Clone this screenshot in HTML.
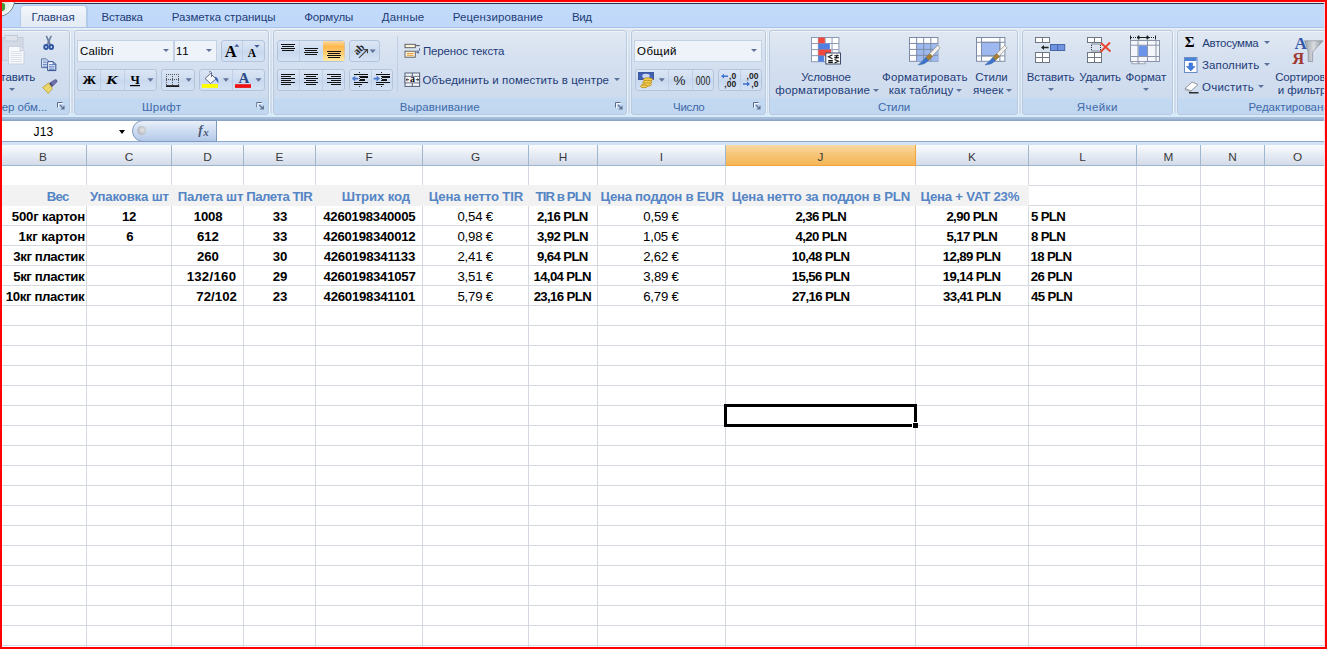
<!DOCTYPE html>
<html lang="ru">
<head>
<meta charset="utf-8">
<title>Excel</title>
<style>
html,body{margin:0;padding:0;}
body{width:1327px;height:649px;overflow:hidden;background:#fff;font-family:"Liberation Sans",sans-serif;}
#win{position:absolute;left:0;top:0;width:1327px;height:649px;overflow:hidden;background:#fff;}
#win div,#win span,#win svg{position:absolute;box-sizing:border-box;}
.red{background:#fe0000;z-index:50;}
.t{white-space:nowrap;line-height:14px;font-size:11.5px;color:#1e3c78;}
.k{color:#000;}
.gl{color:#3e6aaa;}
#topline{left:0;top:2px;width:1327px;height:2px;background:linear-gradient(#f6e4e6 0,#f6e4e6 1px,#26324d 1px,#26324d 2px);}
#tabs{left:0;top:4px;width:1327px;height:24px;background:linear-gradient(#c3dbfb,#bfd8f9);}
#tabact{left:20px;top:5px;width:66.5px;height:24px;border:1px solid #b4cbe8;border-bottom:none;border-radius:4px 4px 0 0;background:linear-gradient(#f3f7fc,#e6edf6 60%,#e4ebf5);box-shadow:1px 0 0 rgba(160,185,220,.5);}
#rib{left:0;top:27px;width:1327px;height:94px;border-top:1px solid #a9c4e8;background:linear-gradient(#e9eff7 0,#e9eff7 1px,#dde5f0 2px,#d3dfee 30%,#cbd9ec 85px,#d6ebfa 86px,#d6ebfa 88.5px,#aac1dd 89px,#a3bad8 91px,#8da5c8 92px,#8da5c8 93px);}
.grp{top:2px;height:84.5px;border:1px solid #b9c9de;border-radius:3px;background:linear-gradient(#e1e8f2 0,#d6e1f0 30%,#cddbee 67px,#c3d8f1 68px,#c1d7f0 100%);box-shadow:1px 0 0 rgba(240,246,253,.9), -1px 0 0 rgba(240,246,253,.6), inset 0 1px 0 rgba(255,255,255,.5);}
.bg{border:1px solid #b3c5dd;border-radius:3px;background:linear-gradient(#dbe6f5,#cfddf0 45%,#c8d8ee 50%,#d4e2f4);height:21.5px;}
.cb{border:1px solid #c3d1e4;background:#eef3fa;height:21.5px;}
.sep{width:1px;background:#bfcfe5;}
.arr{width:0;height:0;border-left:3px solid transparent;border-right:3px solid transparent;border-top:3.5px solid #5d7299;}
.hdr{top:145px;height:21px;border-right:1px solid #9eb6ce;border-bottom:1px solid #9eb6ce;background:linear-gradient(#f9fcfd,#e6ecf4 50%,#d3dbe9);text-align:center;font-size:11.8px;line-height:25px;color:#3a3a3a;}
.c{white-space:nowrap;font-size:13.2px;line-height:20px;height:20px;color:#000;}
.b{font-weight:bold;}
.h{color:#5585c5;font-weight:bold;}
.vl{top:166px;width:1px;height:483px;background:#d5d9e2;}
</style>
</head>
<body>
<div id="win">

<div id="tabs"></div><div id="topline"></div><div id="tabact"></div>
<div style="left:-19px;top:-17px;width:34px;height:34px;border-radius:17px;border:1.5px solid #74848f;background:radial-gradient(circle at 50% 50%,#cfe0d8 0,#e8f0ee 55%,#ffffff 80%)"></div>
<div style="left:2px;top:3px;width:3px;height:8px;background:#3f9a3a;border-radius:0 2px 3px 0"></div>
<div class="t" style="left:31.48px;top:10px;letter-spacing:-0.105px;">Главная</div>
<div class="t" style="left:101.58px;top:10px;letter-spacing:-0.25px;">Вставка</div>
<div class="t" style="left:171.68px;top:10px;letter-spacing:-0.027px;">Разметка страницы</div>
<div class="t" style="left:304.31px;top:10px;letter-spacing:-0.181px;">Формулы</div>
<div class="t" style="left:381.74px;top:10px;letter-spacing:0.192px;">Данные</div>
<div class="t" style="left:452.78px;top:10px;letter-spacing:0.104px;">Рецензирование</div>
<div class="t" style="left:571.98px;top:10px;letter-spacing:-0.432px;">Вид</div>
<div id="rib">
<div class="grp" style="left:-4px;width:73.5px"></div>
<div class="grp" style="left:73.5px;width:195px"></div>
<div class="grp" style="left:272.5px;width:354px"></div>
<div class="grp" style="left:630.5px;width:135.5px"></div>
<div class="grp" style="left:769px;width:248.5px"></div>
<div class="grp" style="left:1021.5px;width:151.5px"></div>
<div class="grp" style="left:1176.5px;width:160px"></div>
</div>
<div class="t gl" style="left:-20.42px;top:100px;letter-spacing:-0.08px;">Буфер обм...</div>
<div class="t gl" style="left:142.08px;top:100px;letter-spacing:0.254px;">Шрифт</div>
<div class="t gl" style="left:399.68px;top:100px;letter-spacing:0.065px;">Выравнивание</div>
<div class="t gl" style="left:673.08px;top:100px;letter-spacing:-0.346px;">Число</div>
<div class="t gl" style="left:878.02px;top:100px;letter-spacing:-0.26px;">Стили</div>
<div class="t gl" style="left:1076.82px;top:100px;letter-spacing:0.419px;">Ячейки</div>
<div class="t gl" style="left:1248.58px;top:100px;">Редактирование</div>
<div class="cb" style="left:77px;top:40px;width:97px"></div>
<div class="t k" style="left:80.12px;top:44px;letter-spacing:0.13px;">Calibri</div>
<div class="arr" style="left:162.5px;top:49px;"></div>
<div class="cb" style="left:174px;top:40px;width:43px"></div>
<div class="t k" style="left:176.04px;top:44px;letter-spacing:0.635px;">11</div>
<div class="arr" style="left:205.5px;top:49px;"></div>
<div class="bg" style="left:220.5px;top:40px;width:44px"></div><div class="sep" style="left:242px;top:41px;height:19.5px"></div>
<div class="bg" style="left:77px;top:69px;width:79.5px"></div><div class="sep" style="left:99.5px;top:70px;height:19.5px"></div><div class="sep" style="left:123.5px;top:70px;height:19.5px"></div>
<div class="bg" style="left:160.5px;top:69px;width:34px"></div>
<div class="bg" style="left:198.5px;top:69px;width:66px"></div><div class="sep" style="left:232px;top:70px;height:19.5px"></div>
<div class="bg" style="left:276.5px;top:40px;width:68px"></div><div class="sep" style="left:299px;top:41px;height:19.5px"></div>
<div class="bg" style="left:348.5px;top:40px;width:31px"></div>
<div class="bg" style="left:276.5px;top:69px;width:68px"></div><div class="sep" style="left:299px;top:70px;height:19.5px"></div><div class="sep" style="left:322px;top:70px;height:19.5px"></div>
<div class="bg" style="left:348.5px;top:69px;width:44.5px"></div><div class="sep" style="left:371px;top:70px;height:19.5px"></div>
<div class="sep" style="left:397px;top:36px;height:56px"></div>
<div class="t" style="left:422.88px;top:44px;letter-spacing:-0.121px;">Перенос текста</div>
<div class="t" style="left:422.48px;top:73px;letter-spacing:0.09px;">Объединить и поместить в центре</div>
<div class="arr" style="left:613.5px;top:78px;"></div>
<div class="cb" style="left:634px;top:40px;width:128px"></div>
<div class="t k" style="left:637.08px;top:44px;letter-spacing:0.372px;">Общий</div>
<div class="arr" style="left:750.5px;top:49px;"></div>
<div class="bg" style="left:634.5px;top:69px;width:79px"></div><div class="sep" style="left:667.5px;top:70px;height:19.5px"></div><div class="sep" style="left:691.5px;top:70px;height:19.5px"></div>
<div class="bg" style="left:717.5px;top:69px;width:44px"></div><div class="sep" style="left:739.5px;top:70px;height:19.5px"></div>
<div class="t" style="left:801.16px;top:70px;letter-spacing:-0.144px;">Условное</div>
<div class="t" style="left:775.34px;top:83px;letter-spacing:0.179px;">форматирование</div>
<div class="arr" style="left:873.0px;top:89px;"></div>
<div class="t" style="left:882.01px;top:70px;letter-spacing:0.168px;">Форматировать</div>
<div class="t" style="left:888.65px;top:83px;letter-spacing:0.164px;">как таблицу</div>
<div class="arr" style="left:956.0px;top:89px;"></div>
<div class="t" style="left:975.22px;top:70px;letter-spacing:-0.185px;">Стили</div>
<div class="t" style="left:972.88px;top:83px;letter-spacing:0.111px;">ячеек</div>
<div class="arr" style="left:1005.5px;top:89px;"></div>
<div class="t" style="left:1026.78px;top:70px;letter-spacing:-0.154px;">Вставить</div>
<div class="arr" style="left:1047.5px;top:88px;"></div>
<div class="t" style="left:1079.36px;top:70px;letter-spacing:-0.378px;">Удалить</div>
<div class="arr" style="left:1096.5px;top:88px;"></div>
<div class="t" style="left:1125.61px;top:70px;letter-spacing:-0.052px;">Формат</div>
<div class="arr" style="left:1142.5px;top:88px;"></div>
<div class="t" style="left:1202.14px;top:36px;letter-spacing:-0.262px;">Автосумма</div>
<div class="arr" style="left:1264.0px;top:41px;"></div>
<div class="t" style="left:1202.1px;top:58px;letter-spacing:0.075px;">Заполнить</div>
<div class="arr" style="left:1263.5px;top:63px;"></div>
<div class="t" style="left:1201.98px;top:80px;letter-spacing:0.25px;">Очистить</div>
<div class="arr" style="left:1257.5px;top:85px;"></div>
<div class="t" style="left:1275.22px;top:70px;letter-spacing:-0.15px;">Сортировка</div>
<div class="t" style="left:1277.79px;top:83px;letter-spacing:-0.05px;">и фильтр</div>
<div class="t" style="left:-12.52px;top:70px;letter-spacing:-0.154px;">Вставить</div>
<div class="arr" style="left:8.8px;top:88px;"></div>
<svg style="left:0;top:0" width="1327" height="120" viewBox="0 0 1327 120">
<rect x="2.5" y="37.5" width="20.5" height="23" fill="#d3dae6" stroke="#c3ccdb" stroke-width="1" />
<rect x="5" y="35.5" width="12.5" height="5.5" fill="#dfe4ec" stroke="#c2cad8" stroke-width="1" />
<path d="M8.5 46.5 H20 L24 50.5 V64 H8.5 Z" fill="#f7f9fc" stroke="#c9d0dc" stroke-width="1" />
<path d="M20 46.5 V50.5 H24" fill="#e6eaf1" stroke="#c9d0dc" stroke-width="1" />
<line x1="10.5" y1="51.5" x2="22" y2="51.5" stroke="#dde2ea" stroke-width="1" />
<line x1="10.5" y1="53.5" x2="22" y2="53.5" stroke="#dde2ea" stroke-width="1" />
<line x1="10.5" y1="55.5" x2="22" y2="55.5" stroke="#dde2ea" stroke-width="1" />
<line x1="10.5" y1="57.5" x2="22" y2="57.5" stroke="#dde2ea" stroke-width="1" />
<line x1="10.5" y1="59.5" x2="22" y2="59.5" stroke="#dde2ea" stroke-width="1" />
<line x1="10.5" y1="61.5" x2="22" y2="61.5" stroke="#dde2ea" stroke-width="1" />
<path d="M46 36 L46.9 36 L51 45.2 L49.6 45.6 Z" fill="#66789c" stroke="#55688f" stroke-width="0.5" />
<path d="M51.6 36 L50.7 36 L46.4 45.2 L47.8 45.6 Z" fill="#7d8db0" stroke="#55688f" stroke-width="0.5" />
<ellipse cx="46" cy="47" rx="1.8" ry="2" fill="#dbe4f3" stroke="#2f55a4" stroke-width="1.9"/>
<ellipse cx="51.3" cy="47" rx="1.8" ry="2" fill="#dbe4f3" stroke="#2f55a4" stroke-width="1.9"/>
<path d="M41.6 58.9 H46.3 L48.7 61.3 V67.6 H41.6 Z" fill="#fdfdff" stroke="#3b5a9b" stroke-width="0.9" />
<line x1="42.8" y1="61" x2="46.8" y2="61" stroke="#4f74bd" stroke-width="0.9" />
<line x1="42.8" y1="62.8" x2="46.8" y2="62.8" stroke="#4f74bd" stroke-width="0.9" />
<line x1="42.8" y1="64.6" x2="46.8" y2="64.6" stroke="#4f74bd" stroke-width="0.9" />
<line x1="42.8" y1="66.2" x2="46.8" y2="66.2" stroke="#4f74bd" stroke-width="0.9" />
<path d="M47.7 61.7 H53.2 L55.8 64.3 V70.6 H47.7 Z" fill="#fdfdff" stroke="#2b4a8b" stroke-width="1" />
<path d="M53.2 61.7 V64.3 H55.8" fill="none" stroke="#2b4a8b" stroke-width="0.8" />
<line x1="49" y1="64.6" x2="54.6" y2="64.6" stroke="#4f74bd" stroke-width="0.9" />
<line x1="49" y1="66.3" x2="54.6" y2="66.3" stroke="#4f74bd" stroke-width="0.9" />
<line x1="49" y1="68" x2="54.6" y2="68" stroke="#4f74bd" stroke-width="0.9" />
<line x1="49" y1="69.4" x2="54.6" y2="69.4" stroke="#4f74bd" stroke-width="0.9" />
<path d="M50.2 82.6 L55.2 79.6 Q57.6 79.6 57 82 L52.8 86 Z" fill="#6d6fa8" stroke="#55588e" stroke-width="0.6" />
<path d="M48.9 83.4 L50.4 82.4 L53 85.8 L52 87.2 Z" fill="#3f4370" />
<path d="M42.6 87.4 L48.7 82.9 L52.3 88.6 L48.2 93.5 Z" fill="#eedb72" stroke="#b59a36" stroke-width="0.8" />
<path d="M44.5 88 L49 84.8 M46.5 90 L50.5 86.5" fill="none" stroke="#d6bd4e" stroke-width="0.7" />
<text x="224.8" y="57" font-family="Liberation Serif, serif" font-size="16.5" font-weight="bold" font-style="normal" fill="#000" text-anchor="start" >A</text>
<polygon points="234.2,46.8 239.4,46.8 236.8,44" fill="#3c5a9a"/>
<text x="247.8" y="57" font-family="Liberation Serif, serif" font-size="11.5" font-weight="bold" font-style="normal" fill="#000" text-anchor="start" >A</text>
<polygon points="254.3,45 259.7,45 257.0,47.8" fill="#3c5a9a"/>
<text x="82.5" y="84" font-family="Liberation Serif, serif" font-size="13.5" font-weight="bold" font-style="normal" fill="#000" text-anchor="start" textLength="13.5" lengthAdjust="spacingAndGlyphs">Ж</text>
<text x="106" y="84" font-family="Liberation Serif, serif" font-size="13.5" font-weight="bold" font-style="italic" fill="#000" text-anchor="start" textLength="11.5" lengthAdjust="spacingAndGlyphs">К</text>
<text x="130.5" y="84" font-family="Liberation Serif, serif" font-size="13.5" font-weight="bold" font-style="normal" fill="#000" text-anchor="start" textLength="9.3" lengthAdjust="spacingAndGlyphs">Ч</text>
<rect x="130" y="85" width="10" height="1.2" fill="#000" />
<polygon points="147.5,78.3 153.5,78.3 150.5,81.8" fill="#5d7299"/>
<line x1="166.5" y1="74" x2="166.5" y2="85" stroke="#555" stroke-width="1" stroke-dasharray="1 1"/>
<line x1="172.5" y1="74" x2="172.5" y2="85" stroke="#555" stroke-width="1" stroke-dasharray="1 1"/>
<line x1="178.5" y1="74" x2="178.5" y2="85" stroke="#555" stroke-width="1" stroke-dasharray="1 1"/>
<line x1="166" y1="74.5" x2="179" y2="74.5" stroke="#555" stroke-width="1" stroke-dasharray="1 1"/>
<line x1="166" y1="79.5" x2="179" y2="79.5" stroke="#555" stroke-width="1" stroke-dasharray="1 1"/>
<rect x="166" y="85.2" width="13.2" height="1.8" fill="#1a1a1a" />
<polygon points="185.7,78.3 191.7,78.3 188.7,81.8" fill="#5d7299"/>
<path d="M205 78.5 L210.5 73.5 L216 79 L210.5 83.5 Z" fill="#f4f6fa" stroke="#55607a" stroke-width="0.9" />
<path d="M209 72.2 Q210.5 70.5 211.5 72.5 V77" fill="none" stroke="#55607a" stroke-width="0.9" />
<path d="M214.8 76.8 Q218.8 77.2 218.3 83.3 Q215.6 81 214.8 76.8 Z" fill="#3d64b8" />
<rect x="201.8" y="84" width="16.2" height="3.9" fill="#ffff00" />
<polygon points="223.0,78.3 229.0,78.3 226.0,81.8" fill="#5d7299"/>
<text x="238.6" y="83" font-family="Liberation Serif, serif" font-size="15" font-weight="bold" font-style="normal" fill="#2b4b86" text-anchor="start" >A</text>
<rect x="235" y="84.2" width="16" height="3.7" fill="#ee1111" />
<polygon points="255.5,78.3 261.5,78.3 258.5,81.8" fill="#5d7299"/>
<defs><linearGradient id="og" x1="0" y1="0" x2="0" y2="1"><stop offset="0" stop-color="#fdd9a3"/><stop offset="0.28" stop-color="#fdb84c"/><stop offset="0.5" stop-color="#fdc462"/><stop offset="1" stop-color="#ffe9a5"/></linearGradient></defs>
<rect x="323" y="41" width="21.5" height="20" fill="url(#og)" />
<rect x="281" y="44" width="14" height="1" fill="#111" shape-rendering="crispEdges"/>
<rect x="304" y="48" width="14" height="1" fill="#111" shape-rendering="crispEdges"/>
<rect x="327" y="51" width="14" height="1" fill="#111" shape-rendering="crispEdges"/>
<rect x="282" y="46" width="12" height="1" fill="#111" shape-rendering="crispEdges"/>
<rect x="305" y="50" width="12" height="1" fill="#111" shape-rendering="crispEdges"/>
<rect x="328" y="53" width="12" height="1" fill="#111" shape-rendering="crispEdges"/>
<rect x="281" y="48" width="14" height="1" fill="#111" shape-rendering="crispEdges"/>
<rect x="304" y="52" width="14" height="1" fill="#111" shape-rendering="crispEdges"/>
<rect x="327" y="55" width="14" height="1" fill="#111" shape-rendering="crispEdges"/>
<rect x="282" y="50" width="12" height="1" fill="#111" shape-rendering="crispEdges"/>
<rect x="305" y="54" width="12" height="1" fill="#111" shape-rendering="crispEdges"/>
<rect x="328" y="57" width="12" height="1" fill="#111" shape-rendering="crispEdges"/>
<text x="0" y="0" font-family="Liberation Serif, serif" font-size="10.5" font-weight="bold" font-style="normal" fill="#222" text-anchor="start" transform="translate(357.2,55.6) rotate(-45)">ab</text>
<path d="M359 57.8 L367 50 M364 49.6 H367.5 V53.2" fill="none" stroke="#444" stroke-width="1.1" />
<polygon points="369.7,49.6 375.7,49.6 372.7,53.1" fill="#5d7299"/>
<rect x="281" y="74" width="14" height="1" fill="#111" shape-rendering="crispEdges"/>
<rect x="304" y="74" width="14" height="1" fill="#111" shape-rendering="crispEdges"/>
<rect x="327" y="74" width="14" height="1" fill="#111" shape-rendering="crispEdges"/>
<rect x="281" y="76" width="10" height="1" fill="#111" shape-rendering="crispEdges"/>
<rect x="306" y="76" width="10" height="1" fill="#111" shape-rendering="crispEdges"/>
<rect x="331" y="76" width="10" height="1" fill="#111" shape-rendering="crispEdges"/>
<rect x="281" y="78" width="14" height="1" fill="#111" shape-rendering="crispEdges"/>
<rect x="304" y="78" width="14" height="1" fill="#111" shape-rendering="crispEdges"/>
<rect x="327" y="78" width="14" height="1" fill="#111" shape-rendering="crispEdges"/>
<rect x="281" y="80" width="10" height="1" fill="#111" shape-rendering="crispEdges"/>
<rect x="306" y="80" width="10" height="1" fill="#111" shape-rendering="crispEdges"/>
<rect x="331" y="80" width="10" height="1" fill="#111" shape-rendering="crispEdges"/>
<rect x="281" y="82" width="14" height="1" fill="#111" shape-rendering="crispEdges"/>
<rect x="304" y="82" width="14" height="1" fill="#111" shape-rendering="crispEdges"/>
<rect x="327" y="82" width="14" height="1" fill="#111" shape-rendering="crispEdges"/>
<rect x="281" y="84" width="10" height="1" fill="#111" shape-rendering="crispEdges"/>
<rect x="306" y="84" width="10" height="1" fill="#111" shape-rendering="crispEdges"/>
<rect x="331" y="84" width="10" height="1" fill="#111" shape-rendering="crispEdges"/>
<line x1="359.5" y1="72" x2="359.5" y2="87" stroke="#222" stroke-width="1" stroke-dasharray="1 1"/>
<rect x="354" y="74" width="14" height="1" fill="#111" shape-rendering="crispEdges"/>
<rect x="360" y="76" width="8" height="2" fill="#111" shape-rendering="crispEdges"/>
<rect x="360" y="79" width="5" height="2" fill="#111" shape-rendering="crispEdges"/>
<rect x="354" y="82" width="14" height="1" fill="#111" shape-rendering="crispEdges"/>
<rect x="354" y="84" width="8" height="1" fill="#111" shape-rendering="crispEdges"/>
<path d="M351.8 78.6 L355.2 75.8 V77.7 H358.2 V79.5 H355.2 V81.4 Z" fill="#4a78d0" />
<line x1="381.5" y1="72" x2="381.5" y2="87" stroke="#222" stroke-width="1" stroke-dasharray="1 1"/>
<rect x="376" y="74" width="14" height="1" fill="#111" shape-rendering="crispEdges"/>
<rect x="382" y="76" width="8" height="2" fill="#111" shape-rendering="crispEdges"/>
<rect x="382" y="79" width="5" height="2" fill="#111" shape-rendering="crispEdges"/>
<rect x="376" y="82" width="14" height="1" fill="#111" shape-rendering="crispEdges"/>
<rect x="376" y="84" width="8" height="1" fill="#111" shape-rendering="crispEdges"/>
<path d="M380 78.6 L376.6 75.8 V77.7 H373.6 V79.5 H376.6 V81.4 Z" fill="#4a78d0" />
<rect x="405" y="44.3" width="10.3" height="3.4" fill="#fdf3d6" stroke="#55555f" stroke-width="0.9" />
<line x1="415.3" y1="45.6" x2="419.8" y2="45.6" stroke="#55555f" stroke-width="1" />
<rect x="405" y="51.2" width="10.3" height="6" fill="#fdf3d6" stroke="#55555f" stroke-width="0.9" />
<line x1="407" y1="53.4" x2="413.5" y2="53.4" stroke="#e39a3a" stroke-width="1" />
<line x1="407" y1="55.3" x2="413.5" y2="55.3" stroke="#e39a3a" stroke-width="1" />
<path d="M419.6 48.3 V50 L417.3 52.6 M417 50.3 V52.8 H419.3" fill="none" stroke="#3b4d78" stroke-width="0.9" />
<rect x="405" y="73" width="14.6" height="13.4" fill="#f4f6fa" stroke="#566079" stroke-width="1" />
<rect x="405" y="76.3" width="14.6" height="6.6" fill="#fdfdfd" stroke="#566079" stroke-width="0.9" />
<line x1="412.3" y1="73" x2="412.3" y2="76.3" stroke="#566079" stroke-width="1" />
<line x1="412.3" y1="83" x2="412.3" y2="86.4" stroke="#566079" stroke-width="1" />
<text x="412.4" y="82.4" font-family="Liberation Serif, serif" font-size="10" font-weight="bold" font-style="normal" fill="#111" text-anchor="middle" >a</text>
<path d="M406 79.7 H409 M415.8 79.7 H418.8 M407.4 78.5 L406 79.7 L407.4 80.9 M417.4 78.5 L418.8 79.7 L417.4 80.9" fill="none" stroke="#222" stroke-width="0.9" />
<rect x="638.5" y="72.5" width="15" height="7" fill="#3f5fb5" stroke="#2c458c" stroke-width="0.8" />
<ellipse cx="646" cy="76" rx="3.8" ry="2.2" fill="#c9d6f3"/>
<ellipse cx="648.0" cy="79.5" rx="4.6" ry="1.7" fill="#f2cf52" stroke="#b8891c" stroke-width="0.8"/>
<ellipse cx="647.4" cy="82" rx="4.6" ry="1.7" fill="#f2cf52" stroke="#b8891c" stroke-width="0.8"/>
<ellipse cx="646.8" cy="84.5" rx="4.6" ry="1.7" fill="#f2cf52" stroke="#b8891c" stroke-width="0.8"/>
<ellipse cx="644" cy="86.3" rx="3.6" ry="1.4" fill="#f2cf52" stroke="#b8891c" stroke-width="0.8"/>
<polygon points="658.8,78.3 664.8,78.3 661.8,81.8" fill="#5d7299"/>
<text x="679.5" y="84.6" font-family="Liberation Sans, serif" font-size="13.5" font-weight="normal" font-style="normal" fill="#222" text-anchor="middle" >%</text>
<text x="703" y="84.6" font-family="Liberation Sans, serif" font-size="12.5" font-weight="normal" font-style="normal" fill="#222" text-anchor="middle" textLength="14.5" lengthAdjust="spacingAndGlyphs">000</text>
<path d="M721 76.2 L724 73.8 V75.4 H728 V77.0 H724 V78.60000000000001 Z" fill="#3f6fd0" />
<text x="736.2" y="78.8" font-family="Liberation Sans, serif" font-size="8.5" font-weight="bold" font-style="normal" fill="#222" text-anchor="end" >,0</text>
<text x="736.2" y="86.7" font-family="Liberation Sans, serif" font-size="8.5" font-weight="bold" font-style="normal" fill="#222" text-anchor="end" >,00</text>
<text x="758.4" y="78.8" font-family="Liberation Sans, serif" font-size="8.5" font-weight="bold" font-style="normal" fill="#222" text-anchor="end" >,00</text>
<path d="M750 84 L747 81.6 V83.2 H743 V84.8 H747 V86.4 Z" fill="#3f6fd0" />
<text x="758.4" y="86.7" font-family="Liberation Sans, serif" font-size="8.5" font-weight="bold" font-style="normal" fill="#222" text-anchor="end" >,0</text>
<rect x="811.5" y="37.5" width="27.4" height="24.2" fill="#fff" stroke="#8b9ab3" stroke-width="1" />
<line x1="818.35" y1="37.5" x2="818.35" y2="61.7" stroke="#8b9ab3" stroke-width="1" />
<line x1="811.5" y1="43.55" x2="838.9" y2="43.55" stroke="#8b9ab3" stroke-width="1" />
<line x1="825.2" y1="37.5" x2="825.2" y2="61.7" stroke="#8b9ab3" stroke-width="1" />
<line x1="811.5" y1="49.6" x2="838.9" y2="49.6" stroke="#8b9ab3" stroke-width="1" />
<line x1="832.05" y1="37.5" x2="832.05" y2="61.7" stroke="#8b9ab3" stroke-width="1" />
<line x1="811.5" y1="55.65" x2="838.9" y2="55.65" stroke="#8b9ab3" stroke-width="1" />
<rect x="818.35" y="37.5" width="6.5" height="6.05" fill="#f04a40" />
<rect x="818.35" y="43.55" width="11.5" height="6.05" fill="#4f7fe0" />
<rect x="818.35" y="49.6" width="12.7" height="6.05" fill="#f04a40" />
<rect x="818.35" y="55.65" width="5.6" height="6.05" fill="#4f7fe0" />
<rect x="825.8" y="53" width="14.7" height="11" fill="#fff" stroke="#3d4b69" stroke-width="1" />
<path d="M832.5 54.8 L828.5 56.8 L832.5 58.8 M834.3 55.8 H838.8 M834.3 57.6 H838.8 M837.3 54.6 L835.8 58.8 M828.3 60.6 H832.8 M828.3 62.4 H832.8 M834.5 59.6 L838.5 61.3 L834.5 63" fill="none" stroke="#111" stroke-width="1.1" />
<rect x="909.5" y="37.5" width="28.4" height="23.8" fill="#fff" stroke="#7d8ca6" stroke-width="1" />
<rect x="916.6" y="43.45" width="21.299999999999997" height="17.85" fill="#9db9f0" />
<line x1="916.6" y1="37.5" x2="916.6" y2="61.3" stroke="#7d8ca6" stroke-width="1" />
<line x1="909.5" y1="43.45" x2="937.9" y2="43.45" stroke="#7d8ca6" stroke-width="1" />
<line x1="923.7" y1="37.5" x2="923.7" y2="61.3" stroke="#7d8ca6" stroke-width="1" />
<line x1="909.5" y1="49.4" x2="937.9" y2="49.4" stroke="#7d8ca6" stroke-width="1" />
<line x1="930.8" y1="37.5" x2="930.8" y2="61.3" stroke="#7d8ca6" stroke-width="1" />
<line x1="909.5" y1="55.35" x2="937.9" y2="55.35" stroke="#7d8ca6" stroke-width="1" />
<path d="M937.7 45.3 L940.1 47.9 L930.5 58.1 L927.9 55.5 Z" fill="#f3f2ee" stroke="#8a8a86" stroke-width="0.7" />
<path d="M929.9 53.7 L932.5 56.4 L928.5 60.3 L925.7 57.5 Z" fill="#a87f30" stroke="#7d5c1c" stroke-width="0.5" />
<path d="M925.7 57.5 L928.5 60.3 Q925.0 64.8 918.0 64.9 Q922.0 61.9 925.7 57.5 Z" fill="#3f73c8" stroke="#2e5aa6" stroke-width="0.4" />
<rect x="976.5" y="37.5" width="28.4" height="23.8" fill="#fff" stroke="#7d8ca6" stroke-width="1" />
<rect x="981.5" y="42.3" width="18.4" height="13.6" fill="#9db9f0" stroke="#7d8ca6" stroke-width="1" />
<line x1="981.5" y1="37.5" x2="981.5" y2="61.3" stroke="#7d8ca6" stroke-width="1" />
<line x1="999.9" y1="37.5" x2="999.9" y2="61.3" stroke="#7d8ca6" stroke-width="1" />
<line x1="976.5" y1="42.3" x2="1004.9" y2="42.3" stroke="#7d8ca6" stroke-width="1" />
<line x1="976.5" y1="55.9" x2="1004.9" y2="55.9" stroke="#7d8ca6" stroke-width="1" />
<path d="M1004.7 45.3 L1007.1 47.9 L997.5 58.1 L994.9 55.5 Z" fill="#f3f2ee" stroke="#8a8a86" stroke-width="0.7" />
<path d="M996.9 53.7 L999.5 56.4 L995.5 60.3 L992.7 57.5 Z" fill="#a87f30" stroke="#7d5c1c" stroke-width="0.5" />
<path d="M992.7 57.5 L995.5 60.3 Q992.0 64.8 985.0 64.9 Q989.0 61.9 992.7 57.5 Z" fill="#3f73c8" stroke="#2e5aa6" stroke-width="0.4" />
<rect x="1035.5" y="37.5" width="14" height="5" fill="#fff" stroke="#6f7785" stroke-width="1" />
<line x1="1042.5" y1="37.5" x2="1042.5" y2="42.5" stroke="#6f7785" stroke-width="1" />
<rect x="1050.5" y="44.5" width="14.2" height="6" fill="#6f93e0" stroke="#4865a8" stroke-width="1" />
<line x1="1057.6" y1="44.5" x2="1057.6" y2="50.5" stroke="#4865a8" stroke-width="1" />
<path d="M1041 47.5 L1044 45 V46.8 H1048.6 V48.2 H1044 V50 Z" fill="#222" />
<rect x="1035.5" y="52.5" width="14" height="10" fill="#fff" stroke="#6f7785" stroke-width="1" />
<line x1="1042.5" y1="52.5" x2="1042.5" y2="62.5" stroke="#6f7785" stroke-width="1" />
<line x1="1035.5" y1="57.5" x2="1049.5" y2="57.5" stroke="#6f7785" stroke-width="1" />
<rect x="1087.5" y="37.5" width="14" height="5" fill="#fff" stroke="#6f7785" stroke-width="1" />
<line x1="1094.5" y1="37.5" x2="1094.5" y2="42.5" stroke="#6f7785" stroke-width="1" />
<rect x="1091.5" y="44" width="9" height="7" fill="none" stroke="#333" stroke-width="1" stroke-dasharray="1 1"/>
<rect x="1087.5" y="52.5" width="14" height="10" fill="#fff" stroke="#6f7785" stroke-width="1" />
<line x1="1094.5" y1="52.5" x2="1094.5" y2="62.5" stroke="#6f7785" stroke-width="1" />
<line x1="1087.5" y1="57.5" x2="1101.5" y2="57.5" stroke="#6f7785" stroke-width="1" />
<path d="M1101 43 L1110.5 51.5 M1110 42.5 L1100.5 52" fill="none" stroke="#e8442c" stroke-width="1.8" />
<line x1="1130.5" y1="35.5" x2="1130.5" y2="39.5" stroke="#222" stroke-width="1" />
<line x1="1155.5" y1="35.5" x2="1155.5" y2="39.5" stroke="#222" stroke-width="1" />
<line x1="1131" y1="37.5" x2="1155" y2="37.5" stroke="#222" stroke-width="1" stroke-dasharray="1 1"/>
<path d="M1137 37.5 H1149 M1137 37.5 l2 -1.8 v3.6 Z M1149 37.5 l-2 -1.8 v3.6 Z" fill="#222" stroke="#222" stroke-width="1" />
<rect x="1130.5" y="40.5" width="29" height="21" fill="#f4f6fb" stroke="#8a94a8" stroke-width="1" />
<rect x="1138.5" y="45.5" width="9" height="11" fill="#6b93ea" />
<line x1="1138" y1="40.5" x2="1138" y2="61.5" stroke="#8a94a8" stroke-width="1" />
<line x1="1147.5" y1="40.5" x2="1147.5" y2="61.5" stroke="#8a94a8" stroke-width="1" />
<line x1="1156" y1="40.5" x2="1156" y2="61.5" stroke="#8a94a8" stroke-width="1" />
<line x1="1130.5" y1="45.2" x2="1159.5" y2="45.2" stroke="#8a94a8" stroke-width="1" />
<line x1="1130.5" y1="56.5" x2="1159.5" y2="56.5" stroke="#8a94a8" stroke-width="1" />
<rect x="1132" y="61.5" width="6" height="2.3" fill="#f4f6fb" stroke="#8a94a8" stroke-width="0.8" />
<rect x="1139" y="61.5" width="6" height="2.3" fill="#f4f6fb" stroke="#8a94a8" stroke-width="0.8" />
<text x="1184.8" y="47.2" font-family="Liberation Serif, serif" font-size="15" font-weight="bold" font-style="normal" fill="#000" text-anchor="start" >Σ</text>
<rect x="1184.5" y="57.5" width="12.5" height="15" fill="#fff" stroke="#6a8cc4" stroke-width="1" />
<rect x="1185" y="58" width="11.5" height="3" fill="#4c82d8" />
<path d="M1189 63 H1192.5 V66.5 H1195 L1190.75 71 L1186.5 66.5 H1189 Z" fill="#3f7ce0" stroke="#2a5cb8" stroke-width="0.5" />
<path d="M1185 88.5 L1192 82 L1198 84.5 L1191 91 Z" fill="#fafafa" stroke="#8a8f98" stroke-width="0.9" />
<path d="M1185 88.5 L1191 91 L1191 92.3 L1185 89.8 Z" fill="#c8ccd4" stroke="#8a8f98" stroke-width="0.5" />
<line x1="1189" y1="92.8" x2="1198.5" y2="92.8" stroke="#111" stroke-width="1.3" />
<text x="1294.5" y="48.5" font-family="Liberation Serif, serif" font-size="17" font-weight="bold" font-style="normal" fill="#3557a8" text-anchor="start" >A</text>
<text x="1292.3" y="63.8" font-family="Liberation Serif, serif" font-size="16.5" font-weight="bold" font-style="normal" fill="#a03a32" text-anchor="start" >Я</text>
<defs><linearGradient id="fg" x1="0" y1="0" x2="1" y2="0"><stop offset="0" stop-color="#9aa0a8"/><stop offset="0.5" stop-color="#d9dce0"/><stop offset="1" stop-color="#8e949c"/></linearGradient></defs>
<path d="M1304.5 40.8 H1323 L1312.6 52 V61.5 H1308.2 V52 Z" fill="url(#fg)" stroke="#7c828a" stroke-width="0.6" />
<path d="M57.5 107.5 V102.5 H62.5" fill="none" stroke="#5b6c8f" stroke-width="1" />
<path d="M58.5 108.0 V103.5 H63" fill="none" stroke="#f4f8fd" stroke-width="1" />
<path d="M60 105 L63.5 108.5 M64 105.8 V109 H60.8" fill="none" stroke="#5b6c8f" stroke-width="1.1" />
<path d="M256.8 107.5 V102.5 H261.8" fill="none" stroke="#5b6c8f" stroke-width="1" />
<path d="M257.8 108.0 V103.5 H262.3" fill="none" stroke="#f4f8fd" stroke-width="1" />
<path d="M259.3 105 L262.8 108.5 M263.3 105.8 V109 H260.1" fill="none" stroke="#5b6c8f" stroke-width="1.1" />
<path d="M615.5 107.5 V102.5 H620.5" fill="none" stroke="#5b6c8f" stroke-width="1" />
<path d="M616.5 108.0 V103.5 H621" fill="none" stroke="#f4f8fd" stroke-width="1" />
<path d="M618 105 L621.5 108.5 M622 105.8 V109 H618.8" fill="none" stroke="#5b6c8f" stroke-width="1.1" />
<path d="M753.5 107.5 V102.5 H758.5" fill="none" stroke="#5b6c8f" stroke-width="1" />
<path d="M754.5 108.0 V103.5 H759" fill="none" stroke="#f4f8fd" stroke-width="1" />
<path d="M756 105 L759.5 108.5 M760 105.8 V109 H756.8" fill="none" stroke="#5b6c8f" stroke-width="1.1" />
</svg>
<div style="left:0;top:121px;width:1327px;height:20px;background:#fff"></div>
<div style="left:0;top:141px;width:1327px;height:4px;background:#d3e2f5;border-top:1px solid #8fa8cb"></div>
<div style="left:132px;top:120px;width:85px;height:22px;border:1px solid #8099c0;border-radius:11px 0 0 11px;background:linear-gradient(#e9f0fa,#cfdef2 45%,#b4c9e8)"></div>
<div style="left:137px;top:126px;width:9px;height:9px;border-radius:5px;background:radial-gradient(circle at 60% 45%,#e8e8e8,#b9bcc2 60%,#c9d6ea)"></div>
<div class="t k" style="left:33.57px;top:125px;letter-spacing:0.075px;font-size:12px;">J13</div>
<div class="arr" style="left:118.5px;top:129.7px;border-top-color:#000;border-width:4.4px 3.9px 0 3.9px"></div>
<div class="t k" style="left:198.3px;top:122px;font:italic bold 13.5px 'Liberation Serif',serif;color:#4c5b78;letter-spacing:0.4px">f<span style="position:relative;top:2px;font-size:11px">x</span></div>
<div style="left:0;top:145px;width:1327px;height:1px;background:#9eb6ce"></div>
<div class="hdr" style="left:0px;width:87px;">B</div>
<div class="hdr" style="left:87px;width:85px;">C</div>
<div class="hdr" style="left:172px;width:72px;">D</div>
<div class="hdr" style="left:244px;width:72px;">E</div>
<div class="hdr" style="left:316px;width:107px;">F</div>
<div class="hdr" style="left:423px;width:106px;">G</div>
<div class="hdr" style="left:529px;width:69px;">H</div>
<div class="hdr" style="left:598px;width:128px;">I</div>
<div class="hdr" style="left:726px;width:190px;background:linear-gradient(#fad9a4,#f7c67a 45%,#f4b655);border-color:#f0a23c;">J</div>
<div class="hdr" style="left:916px;width:113px;">K</div>
<div class="hdr" style="left:1029px;width:108px;">L</div>
<div class="hdr" style="left:1137px;width:64px;">M</div>
<div class="hdr" style="left:1201px;width:64px;">N</div>
<div class="hdr" style="left:1265px;width:66px;">O</div>
<div style="left:0;top:166px;width:1327px;height:483px;background:repeating-linear-gradient(#fff 0,#fff 19px,#d5d9e2 19px,#d5d9e2 20px)"></div>
<div class="vl" style="left:86px"></div>
<div class="vl" style="left:171px"></div>
<div class="vl" style="left:243px"></div>
<div class="vl" style="left:315px"></div>
<div class="vl" style="left:422px"></div>
<div class="vl" style="left:528px"></div>
<div class="vl" style="left:597px"></div>
<div class="vl" style="left:725px"></div>
<div class="vl" style="left:915px"></div>
<div class="vl" style="left:1028px"></div>
<div class="vl" style="left:1136px"></div>
<div class="vl" style="left:1200px"></div>
<div class="vl" style="left:1264px"></div>
<div style="left:0;top:185px;width:1029px;height:21px;background:#f2f2f2"></div>
<div class="c h" style="left:46.64px;top:187px;letter-spacing:-0.635px">Вес</div>
<div class="c h" style="left:90.0px;top:187px;letter-spacing:-0.162px">Упаковка шт</div>
<div class="c h" style="left:177.84px;top:187px;letter-spacing:-0.196px">Палета шт</div>
<div class="c h" style="left:246.14px;top:187px;letter-spacing:-0.474px">Палета TIR</div>
<div class="c h" style="left:341.64px;top:187px;letter-spacing:-0.126px">Штрих код</div>
<div class="c h" style="left:428.64px;top:187px;letter-spacing:-0.179px">Цена нетто TIR</div>
<div class="c h" style="left:535.62px;top:187px;letter-spacing:-0.919px">TIR в PLN</div>
<div class="c h" style="left:600.39px;top:187px;letter-spacing:-0.276px">Цена поддон в EUR</div>
<div class="c h" style="left:731.64px;top:187px;letter-spacing:-0.196px">Цена нетто за поддон в PLN</div>
<div class="c h" style="left:920.39px;top:187px;letter-spacing:-0.219px">Цена + VAT 23%</div>
<div class="c b" style="left:11.8px;top:207px;letter-spacing:-0.195px">500г картон</div>
<div class="c b" style="left:121.91px;top:207px;letter-spacing:-0.2px">12</div>
<div class="c b" style="left:193.74px;top:207px;letter-spacing:-0.172px">1008</div>
<div class="c b" style="left:272.84px;top:207px;letter-spacing:-0.2px">33</div>
<div class="c b" style="left:323.25px;top:207px;letter-spacing:-0.25px">4260198340005</div>
<div class="c " style="left:457.49px;top:207px;letter-spacing:-0.2px">0,54 €</div>
<div class="c b" style="left:537.02px;top:207px;letter-spacing:-0.62px">2,16 PLN</div>
<div class="c " style="left:643.29px;top:207px;letter-spacing:-0.2px">0,59 €</div>
<div class="c b" style="left:795.42px;top:207px;letter-spacing:-0.62px">2,36 PLN</div>
<div class="c b" style="left:946.42px;top:207px;letter-spacing:-0.62px">2,90 PLN</div>
<div class="c b" style="left:1030.9px;top:207px;letter-spacing:-0.62px">5 PLN</div>
<div class="c b" style="left:18.54px;top:227px;letter-spacing:-0.071px">1кг картон</div>
<div class="c b" style="left:126.24px;top:227px;letter-spacing:-0.2px">6</div>
<div class="c b" style="left:196.94px;top:227px;letter-spacing:-0.094px">612</div>
<div class="c b" style="left:272.84px;top:227px;letter-spacing:-0.2px">33</div>
<div class="c b" style="left:323.35px;top:227px;letter-spacing:-0.25px">4260198340012</div>
<div class="c " style="left:457.49px;top:227px;letter-spacing:-0.2px">0,98 €</div>
<div class="c b" style="left:537.08px;top:227px;letter-spacing:-0.62px">3,92 PLN</div>
<div class="c " style="left:643.06px;top:227px;letter-spacing:-0.2px">1,05 €</div>
<div class="c b" style="left:795.55px;top:227px;letter-spacing:-0.62px">4,20 PLN</div>
<div class="c b" style="left:946.45px;top:227px;letter-spacing:-0.62px">5,17 PLN</div>
<div class="c b" style="left:1030.9px;top:227px;letter-spacing:-0.62px">8 PLN</div>
<div class="c b" style="left:13.27px;top:247px;letter-spacing:-0.388px">3кг пластик</div>
<div class="c b" style="left:196.94px;top:247px;letter-spacing:-0.094px">260</div>
<div class="c b" style="left:272.87px;top:247px;letter-spacing:-0.2px">30</div>
<div class="c b" style="left:323.68px;top:247px;letter-spacing:-0.25px">4260198341133</div>
<div class="c " style="left:457.42px;top:247px;letter-spacing:-0.2px">2,41 €</div>
<div class="c b" style="left:537.02px;top:247px;letter-spacing:-0.62px">9,64 PLN</div>
<div class="c " style="left:643.22px;top:247px;letter-spacing:-0.2px">2,62 €</div>
<div class="c b" style="left:791.83px;top:247px;letter-spacing:-0.62px">10,48 PLN</div>
<div class="c b" style="left:942.83px;top:247px;letter-spacing:-0.62px">12,89 PLN</div>
<div class="c b" style="left:1030.44px;top:247px;letter-spacing:-0.62px">18 PLN</div>
<div class="c b" style="left:13.2px;top:267px;letter-spacing:-0.381px">5кг пластик</div>
<div class="c b" style="left:186.64px;top:267px;letter-spacing:0.278px">132/160</div>
<div class="c b" style="left:272.77px;top:267px;letter-spacing:-0.2px">29</div>
<div class="c b" style="left:323.38px;top:267px;letter-spacing:-0.25px">4260198341057</div>
<div class="c " style="left:457.49px;top:267px;letter-spacing:-0.2px">3,51 €</div>
<div class="c b" style="left:533.43px;top:267px;letter-spacing:-0.62px">14,04 PLN</div>
<div class="c " style="left:643.29px;top:267px;letter-spacing:-0.2px">3,89 €</div>
<div class="c b" style="left:791.83px;top:267px;letter-spacing:-0.62px">15,56 PLN</div>
<div class="c b" style="left:942.83px;top:267px;letter-spacing:-0.62px">19,14 PLN</div>
<div class="c b" style="left:1030.84px;top:267px;letter-spacing:-0.62px">26 PLN</div>
<div class="c b" style="left:5.74px;top:287px;letter-spacing:-0.34px">10кг пластик</div>
<div class="c b" style="left:196.31px;top:287px;letter-spacing:0.046px">72/102</div>
<div class="c b" style="left:272.77px;top:287px;letter-spacing:-0.2px">23</div>
<div class="c b" style="left:323.61px;top:287px;letter-spacing:-0.25px">4260198341101</div>
<div class="c " style="left:457.49px;top:287px;letter-spacing:-0.2px">5,79 €</div>
<div class="c b" style="left:533.63px;top:287px;letter-spacing:-0.62px">23,16 PLN</div>
<div class="c " style="left:643.22px;top:287px;letter-spacing:-0.2px">6,79 €</div>
<div class="c b" style="left:792.03px;top:287px;letter-spacing:-0.62px">27,16 PLN</div>
<div class="c b" style="left:943.1px;top:287px;letter-spacing:-0.62px">33,41 PLN</div>
<div class="c b" style="left:1031.1px;top:287px;letter-spacing:-0.62px">45 PLN</div>
<div style="left:724px;top:404px;width:193px;height:23px;border:3px solid #000"></div>
<div style="left:912px;top:422px;width:6px;height:6px;background:#000;border-top:1px solid #fff;border-left:1px solid #fff"></div>
<div style="left:1324px;top:3px;width:1px;height:644px;background:rgba(250,215,225,.85);z-index:49"></div>
<div class="red" style="left:0;top:0;width:1327px;height:2px"></div>
<div class="red" style="left:0;top:647px;width:1327px;height:2px"></div>
<div class="red" style="left:0;top:0;width:2px;height:649px"></div>
<div class="red" style="left:1325px;top:0;width:2px;height:649px"></div>
</div>
</body>
</html>
